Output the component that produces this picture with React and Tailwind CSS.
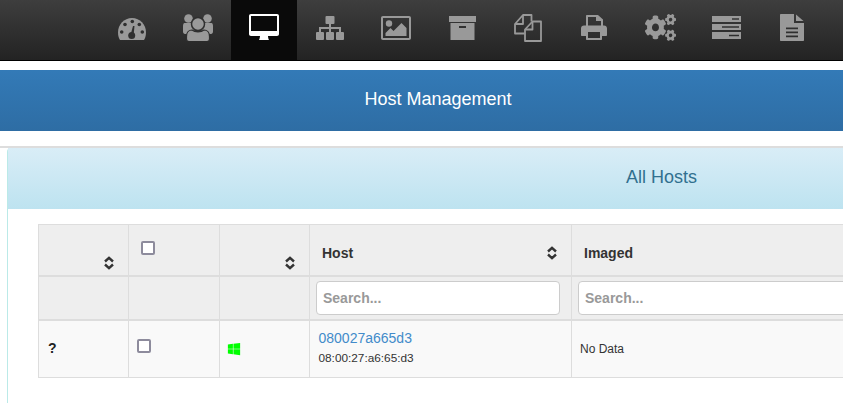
import React from 'react';
import { FaCogs, FaWindows } from 'react-icons/fa';

const NAV_BG = '#2f2f2f';

const Gauge = () => (
  <svg width="28" height="22" viewBox="0 0 28 22">
    <path fill="currentColor" d="M14 0C6 0 0 6.500 0 14.500c0 3 .8 5.500 2 7.500h24c1.200-2 2-4.500 2-7.500C28 6.500 22 0 14 0z" />
    <g fill={NAV_BG}>
      <circle cx="3.700" cy="14" r="1.800" />
      <circle cx="7" cy="6.500" r="1.800" />
      <circle cx="14.300" cy="3.500" r="1.800" />
      <circle cx="21.300" cy="6.500" r="1.800" />
      <circle cx="24.300" cy="14" r="1.800" />
      <circle cx="13.700" cy="17.500" r="3.500" />
      <path d="M12.500 17l2.500-9h1.500l-1 10z" />
    </g>
  </svg>
);

const Users = () => (
  <svg width="30" height="27" viewBox="0 0 30 27" fill="currentColor">
    <circle cx="5.500" cy="4.500" r="4.300" />
    <circle cx="24.500" cy="4.500" r="4.300" />
    <path d="M1.500 9h8l2 8H6l-2 3H2c-1.200 0-2-1-2-2.500v-5C0 10.500.5 9 1.500 9zM20.500 9h8c1 0 1.500 1.500 1.500 3.500v5c0 1.500-.8 2.500-2 2.500h-2l-2-3h-5.500z" />
    <circle cx="15" cy="10" r="6.500" stroke={NAV_BG} strokeWidth="1.500" />
    <path stroke={NAV_BG} strokeWidth="1.200" d="M9 16c3 2.500 9 2.500 12 0 3.500 0 5.500 3 5.500 6.500V25c0 1.500-1 2.500-2.500 2.500H6C4.500 27.500 3.500 26.500 3.500 25v-2.500C3.500 19 5.500 16 9 16z" />
  </svg>
);

const Monitor = () => (
  <svg width="30" height="26" viewBox="0 0 30 26" fill="currentColor">
    <path fillRule="evenodd" d="M2 0h26c1.200 0 2 .8 2 2v18c0 1.200-.8 2-2 2H19c0 1.500.5 3 1 4H10c.5-1 1-2.500 1-4H2c-1.200 0-2-.8-2-2V2C0 .8.8 0 2 0zM2 2v15h26V2z" />
  </svg>
);

const Sitemap = () => (
  <svg width="28" height="24" viewBox="0 0 28 24" fill="currentColor">
    <rect x="9.500" y="0" width="9" height="8" rx="1" />
    <path d="M13 8h2v3h10v5h-2v-3h-8v3h-2v-3H5v3H3v-5h10z" />
    <rect x="0" y="16" width="8" height="8" rx="1" />
    <rect x="10" y="16" width="8" height="8" rx="1" />
    <rect x="20" y="16" width="8" height="8" rx="1" />
  </svg>
);

const Picture = () => (
  <svg width="30" height="24" viewBox="0 0 30 24" fill="currentColor">
    <path fillRule="evenodd" d="M2 0h26c1.200 0 2 .8 2 2v20c0 1.200-.8 2-2 2H2c-1.200 0-2-.8-2-2V2C0 .8.8 0 2 0zM2 2v20h26V2z" />
    <circle cx="8" cy="7.500" r="3.200" />
    <path d="M4.500 20v-3l5-5 3 3 8-8 5 5v8z" />
  </svg>
);

const ArchiveBox = () => (
  <svg width="27" height="24" viewBox="0 0 27 24" fill="currentColor">
    <path fillRule="evenodd" d="M0 0h27v6H0zM1.500 7h24v17h-24zM10 10v2h7v-2z" />
  </svg>
);

const Files = () => (
  <svg width="28" height="28" viewBox="0 0 28 28" fill="none" stroke="currentColor" strokeWidth="1.800" strokeLinejoin="round">
    <path d="M10.500 19.500H1V10l8-9h8.500v6.500" />
    <path d="M9 1.500V10H1.500" />
    <path d="M11 27V15.500L18.500 7.500H27V27z" />
    <path d="M18.500 8v7.500H11.500" />
  </svg>
);

const Printer = () => (
  <svg width="26" height="25" viewBox="0 0 26 25" fill="currentColor">
    <path fillRule="evenodd" d="M6 0h11l5 4.500V11h-2V6h-5V2H7v9H5V1c0-.6.4-1 1-1z" />
    <path fillRule="evenodd" d="M3 10.500h20c1.800 0 3 1.200 3 3V20c0 .6-.4 1-1 1h-4v3c0 .6-.4 1-1 1H6c-.6 0-1-.4-1-1v-3H1c-.6 0-1-.4-1-1v-6.500c0-1.800 1.200-3 3-3zM7 17v6h12v-6z" />
  </svg>
);

const Server = () => (
  <svg width="29" height="23" viewBox="0 0 29 23" fill="currentColor">
    <path fillRule="evenodd" d="M0 0h29v6H0zM20 2.200v1.600h7V2.200zM0 8h29v6H0zM10 10.200v1.600h17v-1.600zM0 16h29v7H0zM17 18.700v1.600h10v-1.600z" />
  </svg>
);

const FileDoc = () => (
  <svg width="24" height="27" viewBox="0 0 24 27" fill="currentColor">
    <path fillRule="evenodd" d="M1 0h13v9h10v17c0 .6-.4 1-1 1H1c-.6 0-1-.4-1-1V1c0-.6.4-1 1-1zM6 13.500v1.800h12v-1.800zM6 17.500v1.800h12v-1.800zM6 21.500v1.800h12v-1.800z" />
    <path d="M16 .5L23.500 7H16z" />
  </svg>
);

const navItems = [
  { top: 'pt-[18px]', icon: <Gauge /> },
  { top: 'pt-[14px]', icon: <Users /> },
  { top: 'pt-[14px]', icon: <Monitor /> },
  { top: 'pt-[16px]', icon: <Sitemap /> },
  { top: 'pt-[16px]', icon: <Picture /> },
  { top: 'pt-[16px]', icon: <ArchiveBox /> },
  { top: 'pt-[14px]', icon: <Files /> },
  { top: 'pt-[15px]', icon: <Printer /> },
  { top: 'pt-[14px]', icon: <FaCogs className="h-[27px] w-[31px]" preserveAspectRatio="none" /> },
  { top: 'pt-[16px]', icon: <Server /> },
  { top: 'pt-[14px]', icon: <FileDoc /> },
];

const Sort = () => (
  <svg width="10" height="14" viewBox="0 0 10 14" fill="none" stroke="#333" strokeWidth="2.400" className="shrink-0">
    <path d="M1 5.500L5 1.800l4 3.700M1 8.500l4 3.700 4-3.700" />
  </svg>
);

const SearchBox = ({ className }) => (
  <input
    placeholder="Search..."
    className={`h-[34px] rounded border border-[#ccc] bg-white px-[6px] text-sm font-bold text-[#333] placeholder:text-[#999] ${className}`}
  />
);

const headCell = 'border border-[#ddd] border-b-2 bg-[#eee] align-bottom text-sm font-bold text-[#333]';
const filterCell = 'border border-[#ddd] border-b-2 bg-[#eee] px-[6px]';
const bodyCell = 'border border-[#ddd] bg-[#f9f9f9]';

export default function App() {
  return (
    <div className="h-[403px] w-[843px] overflow-hidden bg-white font-['Liberation_Sans',sans-serif]">
      <nav className="flex h-[61px] border-b border-black bg-gradient-to-b from-[#3e3e3e] to-[#232323] pl-[99px]">
        {navItems.map((item, i) => (
          <div
            key={i}
            className={`flex h-[60px] w-[66px] shrink-0 items-start justify-center ${item.top} ${i === 2 ? 'bg-[#0a0a0a] text-white' : 'text-[#999]'}`}
          >
            {item.icon}
          </div>
        ))}
      </nav>

      <div className="mt-[9px] flex h-[61px] items-center justify-center bg-gradient-to-b from-[#337ab7] to-[#2e6da4] pb-[3px] pl-[33px] text-lg text-white">
        Host Management
      </div>

      <div className="mt-[15px] border-t-2 border-[#ddd] pl-[7px]">
        <div className="h-[260px] w-[1308px] rounded-tl border-l border-[#bbeae8]">
          <div className="flex h-[61px] items-center justify-center bg-gradient-to-b from-[#d9edf7] to-[#bde3f0] pb-[4px] text-lg text-[#31708f]">
            All Hosts
          </div>
          <div className="pt-[15px] pl-[30px]">
            <table className="w-[1240px] table-fixed border-collapse">
              <thead>
                <tr className="h-[51px]">
                  <th className={`${headCell} w-[90px]`}>
                    <div className="flex justify-end pr-[14px] pb-[5px]"><Sort /></div>
                  </th>
                  <th className={`${headCell} w-[91px] align-top`}>
                    <div className="pt-[16px] pl-[12px]">
                      <div className="h-[14px] w-[14px] rounded-[2px] border-2 border-[#8d8b9c] bg-white" />
                    </div>
                  </th>
                  <th className={`${headCell} w-[90px]`}>
                    <div className="flex justify-end pr-[14px] pb-[5px]"><Sort /></div>
                  </th>
                  <th className={`${headCell} w-[262px] align-middle`}>
                    <div className="flex items-center justify-between pt-[6px] pr-[14px] pl-[12px]">Host <Sort /></div>
                  </th>
                  <th className={`${headCell} align-middle`}>
                    <div className="px-[12px] pt-[6px] text-left">Imaged</div>
                  </th>
                </tr>
                <tr className="h-[44px]">
                  <th className={filterCell} />
                  <th className={filterCell} />
                  <th className={filterCell} />
                  <th className={filterCell}><SearchBox className="block w-[244px]" /></th>
                  <th className={filterCell}><SearchBox className="block w-[400px]" /></th>
                </tr>
              </thead>
              <tbody>
                <tr className="h-[58px]">
                  <td className={`${bodyCell} pl-[9px] text-[14px] font-bold text-[#222]`}>?</td>
                  <td className={bodyCell}>
                    <div className="mb-[6px] ml-[8px] h-[14px] w-[14px] rounded-[2px] border-2 border-[#8d8b9c] bg-white" />
                  </td>
                  <td className={`${bodyCell} pl-[8px]`}><FaWindows className="-ml-[1px] text-[#00ff00]" size={14} /></td>
                  <td className={`${bodyCell} px-[8.5px] pb-[2px] text-xs text-[#333]`}>
                    <a className="mb-[2px] block text-sm leading-[20px] text-[#428bca]">080027a665d3</a>
                    <div className="mt-[2px] text-[11.8px] leading-[17px]">08:00:27:a6:65:d3</div>
                  </td>
                  <td className={`${bodyCell} px-[8px] text-xs text-[#333]`}>No Data</td>
                </tr>
              </tbody>
            </table>
          </div>
        </div>
      </div>
    </div>
  );
}
